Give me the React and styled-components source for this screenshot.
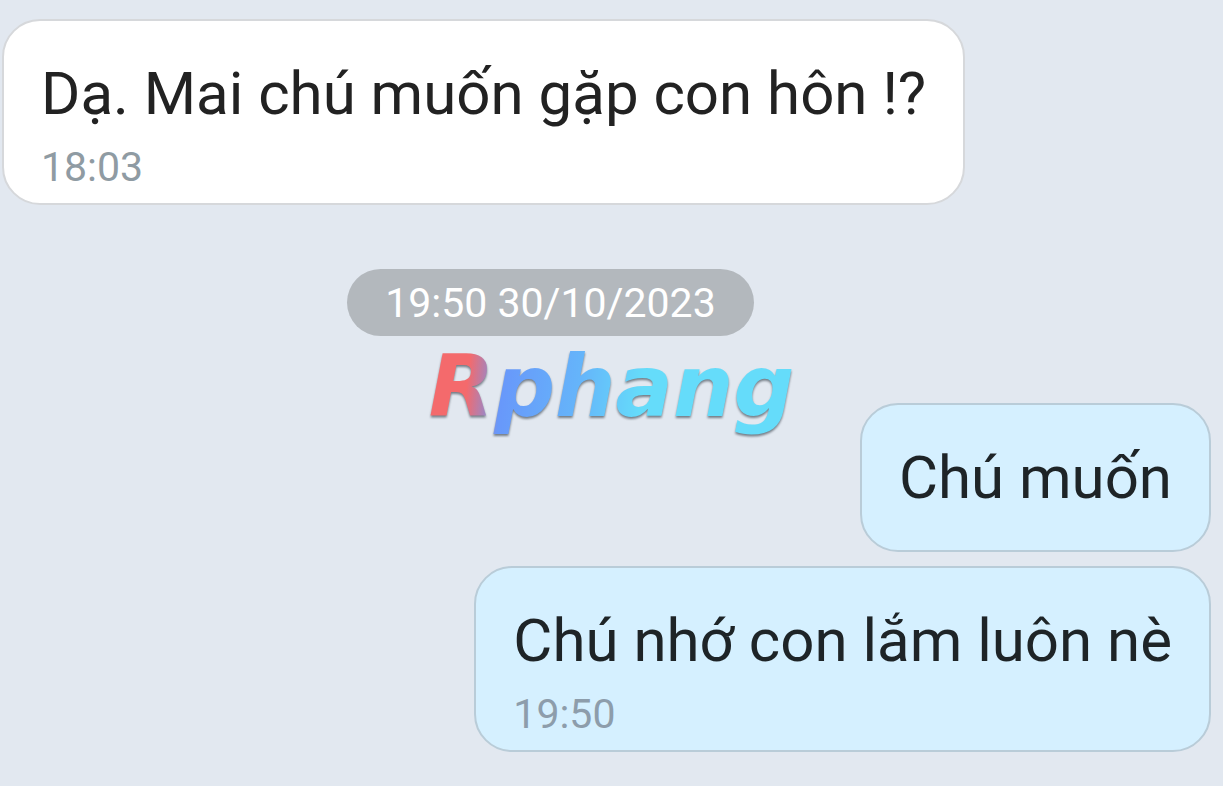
import React from "react";
import styled, { createGlobalStyle } from "styled-components";

const GlobalStyle = createGlobalStyle`
  * { box-sizing: border-box; }
  body {
    margin: 0;
    background: #e2e8f0;
    font-family: Roboto, "Noto Sans", sans-serif;
  }
`;

const Conversation = styled.main`
  position: relative;
  display: flex;
  flex-direction: column;
  min-height: 100vh;
  padding: 19px 12px 34px 2px;
  overflow: hidden;
`;

const DateRow = styled.div`
  display: flex;
  justify-content: center;
  padding: 64px 112px 67px 0;
`;

const DatePill = styled.time`
  padding: 10px 38px 9px;
  border-radius: 34px;
  background: #b3b8bd;
  color: #ffffff;
  font-size: 41px;
  line-height: 48px;
  white-space: nowrap;
`;

const MessageGroup = styled.div`
  display: flex;
  flex-direction: column;
  align-items: ${({ $own }) => ($own ? "flex-end" : "flex-start")};
  gap: 14px;
`;

const Bubble = styled.article`
  max-width: 100%;
  padding: 37px 37px ${({ $timed }) => ($timed ? 12 : 36)}px;
  border: 2px solid ${({ $own }) => ($own ? "#b9ccd8" : "#d6d8db")};
  border-radius: 38px;
  background: ${({ $own }) => ($own ? "#d5f0ff" : "#ffffff")};
`;

const MessageText = styled.p`
  margin: 0;
  color: ${({ $own }) => ($own ? "#1e2427" : "#222222")};
  font-size: 60px;
  line-height: 72px;
`;

const MessageTime = styled.time`
  display: block;
  margin-top: 13px;
  color: ${({ $own }) => ($own ? "#8d9dab" : "#8f9ba3")};
  font-size: 41px;
  line-height: 48px;
`;

const Watermark = styled.div`
  position: absolute;
  inset: 0;
  display: flex;
  align-items: center;
  justify-content: center;
  padding-bottom: 12px;
  pointer-events: none;
`;

const Wordmark = styled.span`
  padding: 0 8px;
  background: linear-gradient(96deg, #f46a6c 13%, #6898fa 22%, #65b5fa 42%, #65dcfa 58%);
  background-clip: text;
  color: transparent;
  font-family: "DejaVu Sans", sans-serif;
  font-size: 85px;
  font-style: italic;
  font-weight: 700;
  line-height: 100px;
  filter: drop-shadow(0 2px 1px #59636dcc);
`;

function Message({ own = false, time, children }) {
  return (
    <Bubble $own={own} $timed={Boolean(time)}>
      <MessageText $own={own}>{children}</MessageText>
      {time && <MessageTime $own={own}>{time}</MessageTime>}
    </Bubble>
  );
}

export default function App() {
  return (
    <>
      <GlobalStyle />
      <Conversation lang="vi">
        <MessageGroup>
          <Message time="18:03">Dạ. Mai chú muốn gặp con hôn !?</Message>
        </MessageGroup>
        <DateRow>
          <DatePill dateTime="2023-10-30T19:50">19:50 30/10/2023</DatePill>
        </DateRow>
        <MessageGroup $own>
          <Message own>Chú muốn</Message>
          <Message own time="19:50">Chú nhớ con lắm luôn nè</Message>
        </MessageGroup>
        <Watermark>
          <Wordmark>Rphang</Wordmark>
        </Watermark>
      </Conversation>
    </>
  );
}
